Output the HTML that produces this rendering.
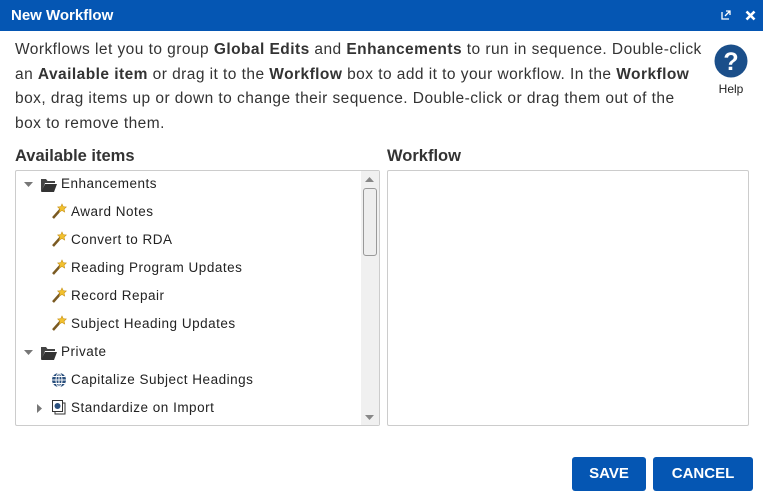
<!DOCTYPE html>
<html><head><meta charset="utf-8"><style>
*{box-sizing:border-box;margin:0;padding:0}
body{width:763px;height:497px;background:#fff;font-family:"Liberation Sans",sans-serif;color:#333;position:relative;overflow:hidden}
.tb{position:absolute;left:0;top:0;width:763px;height:31px;background:#0556b3;color:#fff;font-weight:bold;font-size:15px;line-height:31px;padding-left:11px}
.p{position:absolute;left:15px;top:38px;width:700px;font-size:15.5px;line-height:24.5px;color:#333;white-space:nowrap;letter-spacing:0.45px}
.help{position:absolute;left:714px;top:44px;width:34px;text-align:center;font-size:12px;color:#222}
.h{position:absolute;top:147px;font-size:16.5px;font-weight:bold;color:#333}
.box{position:absolute;top:170px;height:256px;border:1px solid #ccc;border-radius:2px;background:#fff}
.row{position:absolute;font-size:13.5px;color:#222;height:20px;line-height:20px;white-space:nowrap;letter-spacing:0.5px}
.btn{position:absolute;top:457px;height:34px;background:#0556b3;color:#fff;font-weight:bold;font-size:15px;line-height:34px;text-align:center;border-radius:3px}
</style></head><body>
<div class="tb">New Workflow
<svg style="position:absolute;left:721px;top:10px" width="10" height="10" viewBox="0 0 10 10"><path d="M1 2v7h7" fill="none" stroke="#fff" stroke-width="1.3"/><path d="M4 6l5-5M5 1h4v4" fill="none" stroke="#fff" stroke-width="1.3"/></svg>
<svg style="position:absolute;left:745px;top:10px" width="11" height="11" viewBox="0 0 11 11"><path d="M1.5 1.5l8 8M9.5 1.5l-8 8" stroke="#fff" stroke-width="2.6"/></svg>
</div>
<div class="p">Workflows let you to group <b>Global Edits</b> and <b>Enhancements</b> to run in sequence. Double-click<br>an <b>Available item</b> or drag it to the <b>Workflow</b> box to add it to your workflow. In the <b>Workflow</b><br>box, drag items up or down to change their sequence. Double-click or drag them out of the<br>box to remove them.</div>
<div class="help"><svg width="34" height="34" viewBox="0 0 34 34"><circle cx="17" cy="17" r="16.5" fill="#1b4f8a"/><text x="17" y="26" text-anchor="middle" font-family="Liberation Sans" font-weight="bold" font-size="25" fill="#fff">?</text></svg><div style="margin-top:1px">Help</div></div>
<div class="h" style="left:15px">Available items</div>
<div class="h" style="left:387px">Workflow</div>
<div class="box" style="left:15px;width:365px">
 <div style="position:absolute;right:0;top:0;width:18px;height:254px;background:#f0f0f0"></div>
 <svg style="position:absolute;right:5px;top:6px" width="9" height="6"><path d="M0 5L4.5 0 9 5z" fill="#888"/></svg>
 <div style="position:absolute;right:2px;top:17px;width:14px;height:68px;border:1px solid #999;border-radius:3px;background:#eee"></div>
 <svg style="position:absolute;right:5px;top:244px" width="9" height="6"><path d="M0 0L4.5 5 9 0z" fill="#888"/></svg>
</div>
<div class="box" style="left:387px;width:362px"></div>

<svg style="position:absolute;left:24px;top:182px" width="9" height="6"><path d="M0 0h9L4.5 5z" fill="#777"/></svg>
<svg style="position:absolute;left:40px;top:177px" width="18" height="16"><path d="M1 2h5l1.5 2H15v2H5L2 14H1z" fill="#444"/><path d="M5 7h12l-3 8H1z" fill="#333"/></svg>
<div class="row" style="left:61px;top:174px">Enhancements</div>

<svg style="position:absolute;left:24px;top:350px" width="9" height="6"><path d="M0 0h9L4.5 5z" fill="#777"/></svg>
<svg style="position:absolute;left:40px;top:345px" width="18" height="16"><path d="M1 2h5l1.5 2H15v2H5L2 14H1z" fill="#444"/><path d="M5 7h12l-3 8H1z" fill="#333"/></svg>
<div class="row" style="left:61px;top:342px">Private</div>

<svg style="position:absolute;left:51px;top:203px" width="16" height="16"><path d="M2 15L10 6" stroke="#7a5a22" stroke-width="2.5"/><path d="M11 1l1.3 2.7 3 .3-2.2 2 .6 3-2.7-1.5-2.7 1.5.6-3-2.2-2 3-.3z" fill="#f2c12e" stroke="#c9941a" stroke-width=".6"/></svg>
<div class="row" style="left:71px;top:202px">Award Notes</div>
<svg style="position:absolute;left:51px;top:231px" width="16" height="16"><path d="M2 15L10 6" stroke="#7a5a22" stroke-width="2.5"/><path d="M11 1l1.3 2.7 3 .3-2.2 2 .6 3-2.7-1.5-2.7 1.5.6-3-2.2-2 3-.3z" fill="#f2c12e" stroke="#c9941a" stroke-width=".6"/></svg>
<div class="row" style="left:71px;top:230px">Convert to RDA</div>
<svg style="position:absolute;left:51px;top:259px" width="16" height="16"><path d="M2 15L10 6" stroke="#7a5a22" stroke-width="2.5"/><path d="M11 1l1.3 2.7 3 .3-2.2 2 .6 3-2.7-1.5-2.7 1.5.6-3-2.2-2 3-.3z" fill="#f2c12e" stroke="#c9941a" stroke-width=".6"/></svg>
<div class="row" style="left:71px;top:258px">Reading Program Updates</div>
<svg style="position:absolute;left:51px;top:287px" width="16" height="16"><path d="M2 15L10 6" stroke="#7a5a22" stroke-width="2.5"/><path d="M11 1l1.3 2.7 3 .3-2.2 2 .6 3-2.7-1.5-2.7 1.5.6-3-2.2-2 3-.3z" fill="#f2c12e" stroke="#c9941a" stroke-width=".6"/></svg>
<div class="row" style="left:71px;top:286px">Record Repair</div>
<svg style="position:absolute;left:51px;top:315px" width="16" height="16"><path d="M2 15L10 6" stroke="#7a5a22" stroke-width="2.5"/><path d="M11 1l1.3 2.7 3 .3-2.2 2 .6 3-2.7-1.5-2.7 1.5.6-3-2.2-2 3-.3z" fill="#f2c12e" stroke="#c9941a" stroke-width=".6"/></svg>
<div class="row" style="left:71px;top:314px">Subject Heading Updates</div>

<svg style="position:absolute;left:51px;top:372px" width="16" height="16" viewBox="0 0 16 16"><circle cx="8" cy="8" r="7" fill="#2a4f7d"/><g fill="none" stroke="#fff" stroke-width="1"><ellipse cx="8" cy="8" rx="3" ry="7"/><path d="M1 8h14M2 4.5h12M2 11.5h12M8 1v14"/></g></svg>
<div class="row" style="left:71px;top:370px">Capitalize Subject Headings</div>

<svg style="position:absolute;left:37px;top:404px" width="6" height="9"><path d="M0 0v9l5-4.5z" fill="#777"/></svg>
<svg style="position:absolute;left:51px;top:399px" width="16" height="16" viewBox="0 0 16 16"><rect x="4" y="4" width="10" height="11" fill="#fff" stroke="#333"/><rect x="1.5" y="1.5" width="10" height="11" fill="#fff" stroke="#333"/><circle cx="6.5" cy="7" r="3" fill="#2a4f7d"/></svg>
<div class="row" style="left:71px;top:398px">Standardize on Import</div>

<div class="btn" style="left:572px;width:74px">SAVE</div>
<div class="btn" style="left:653px;width:100px">CANCEL</div>
</body></html>
